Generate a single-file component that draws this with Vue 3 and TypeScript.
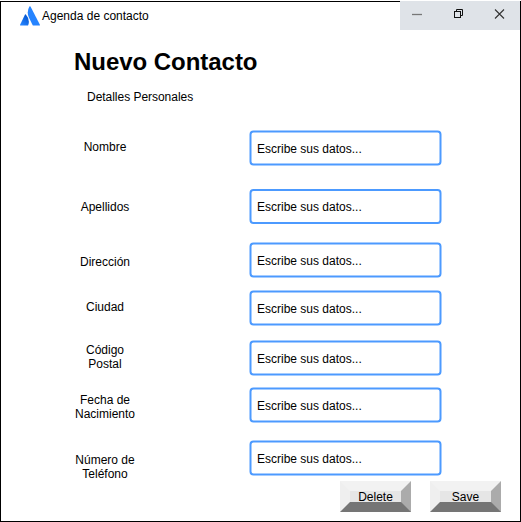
<script setup lang="ts">
interface Field {
  id: string
  lines: string[]
  offset: number
}

const fields: Field[] = [
  { id: 'nombre', lines: ['Nombre'], offset: 0.5 },
  { id: 'apellidos', lines: ['Apellidos'], offset: 0 },
  { id: 'direccion', lines: ['Dirección'], offset: 0.5 },
  { id: 'ciudad', lines: ['Ciudad'], offset: 0.5 },
  { id: 'codigo', lines: ['Código', 'Postal'], offset: 0.5 },
  { id: 'fecha', lines: ['Fecha de', 'Nacimiento'], offset: 0.5 },
  { id: 'telefono', lines: ['Número de', 'Teléfono'], offset: 0.5 },
]
</script>

<template>
  <main class="window">
    <header class="titlebar">
      <div class="brand">
        <svg class="logo" width="20" height="20" viewBox="0 0 20 20">
          <defs>
            <linearGradient id="wing" x1="0.9" y1="0.1" x2="0.3" y2="1">
              <stop offset="0" stop-color="#0052cc" />
              <stop offset="1" stop-color="#2684ff" />
            </linearGradient>
          </defs>
          <path d="M5.900 8.600Q5.300 7.900 4.900 8.700L.1 18.800Q-.1 19.600.7 19.600H7.500Q8 19.600 8.200 19.200Q10.300 13.800 5.900 8.600Z" fill="url(#wing)" />
          <path d="M9.400.6Q6.300 6 8.900 11.600L12.700 19.200Q12.900 19.600 13.400 19.600H19.500Q20.100 19.600 19.900 18.800L10.500.6Q9.900-.1 9.400.6Z" fill="#2684ff" />
        </svg>
        <span>Agenda de contacto</span>
      </div>
      <div class="controls">
        <svg width="120" height="29" viewBox="0 0 120 29">
          <path d="M12 13.500H22" stroke="#777" stroke-width="1.300" />
          <path d="M56.500 10.500V8.500H62.500V14.500H60.500" fill="none" stroke="#111" />
          <rect x="54.500" y="10.500" width="6" height="6" fill="none" stroke="#111" />
          <path d="M95 8.500L104 17.500M104 8.500L95 17.500" stroke="#333" stroke-width="1.100" />
        </svg>
      </div>
    </header>

    <h1>Nuevo Contacto</h1>
    <h2>Detalles Personales</h2>

    <form class="form" @submit.prevent>
      <div v-for="f in fields" :key="f.id" class="row" :class="f.id">
        <div class="label"><div v-for="l in f.lines" :key="l">{{ l }}</div></div>
        <div class="field">
          <svg class="outline" width="193" height="36">
            <rect x="1.500" :y="1 + f.offset" width="190" height="33" rx="3" fill="#fff" stroke="#4c9aff" stroke-width="2" />
          </svg>
          <span class="hint">Escribe sus datos...</span>
        </div>
      </div>
    </form>

    <footer class="actions">
      <button type="button">Delete</button>
      <button type="button">Save</button>
    </footer>
  </main>
</template>

<style>
body {
  margin: 0;
  background: #fff;
}
</style>

<style scoped>
.window {
  box-sizing: border-box;
  width: 521px;
  height: 521px;
  margin-top: 1px;
  border: 1px solid #000;
  background: #fff;
  color: #000;
  font: 12px/14px "Liberation Sans", Arial, sans-serif;
  display: flow-root;
}
.titlebar {
  display: flex;
  justify-content: space-between;
  height: 28px;
  margin-top: -1px;
}
.brand {
  display: flex;
  gap: 2px;
  padding: 5px 0 0 19px;
}
.brand span {
  padding-top: 3px;
}
.logo {
  display: block;
}
.controls {
  width: 120px;
  height: 29px;
  background: #dfe3e8;
}
.controls svg {
  display: block;
}
h1 {
  margin: 19px 0 0 73px;
  font-size: 24px;
  line-height: 28px;
  font-weight: 700;
  letter-spacing: -0.04px;
}
h2 {
  margin: 14px 0 0 86px;
  font-size: 12px;
  line-height: 14px;
  font-weight: 400;
  letter-spacing: -0.03px;
}
.form {
  display: grid;
  grid-template-rows: 59px 53px 48px 50px 47px 53px 36px;
  margin-top: 26px;
}
.row {
  display: grid;
  grid-template-columns: 208px 193px;
  padding-left: 40px;
  align-items: start;
}
.label {
  width: 128px;
  text-align: center;
  padding-top: 10px;
}
.apellidos .label {
  padding-top: 11px;
}
.direccion .label {
  padding-top: 13px;
}
.codigo .label {
  padding-top: 3px;
}
.fecha .label {
  padding-top: 6px;
}
.telefono .label {
  padding-top: 13px;
}
.field {
  display: grid;
  height: 36px;
}
.outline,
.hint {
  grid-area: 1 / 1;
}
.outline {
  display: block;
}
.hint {
  padding: 12px 0 0 8px;
}
.apellidos .hint {
  padding-top: 11px;
}
.actions {
  display: flex;
  gap: 19px;
  margin: 5px 0 0 339px;
}
button {
  box-sizing: border-box;
  width: 71px;
  height: 31px;
  padding: 1px 0 0;
  border: 10px solid;
  border-color: #f2f2f2 #ababab #757575 #efefef;
  background: #e6e6e6;
  color: #000;
  font: inherit;
  line-height: 10px;
  white-space: nowrap;
}
</style>
